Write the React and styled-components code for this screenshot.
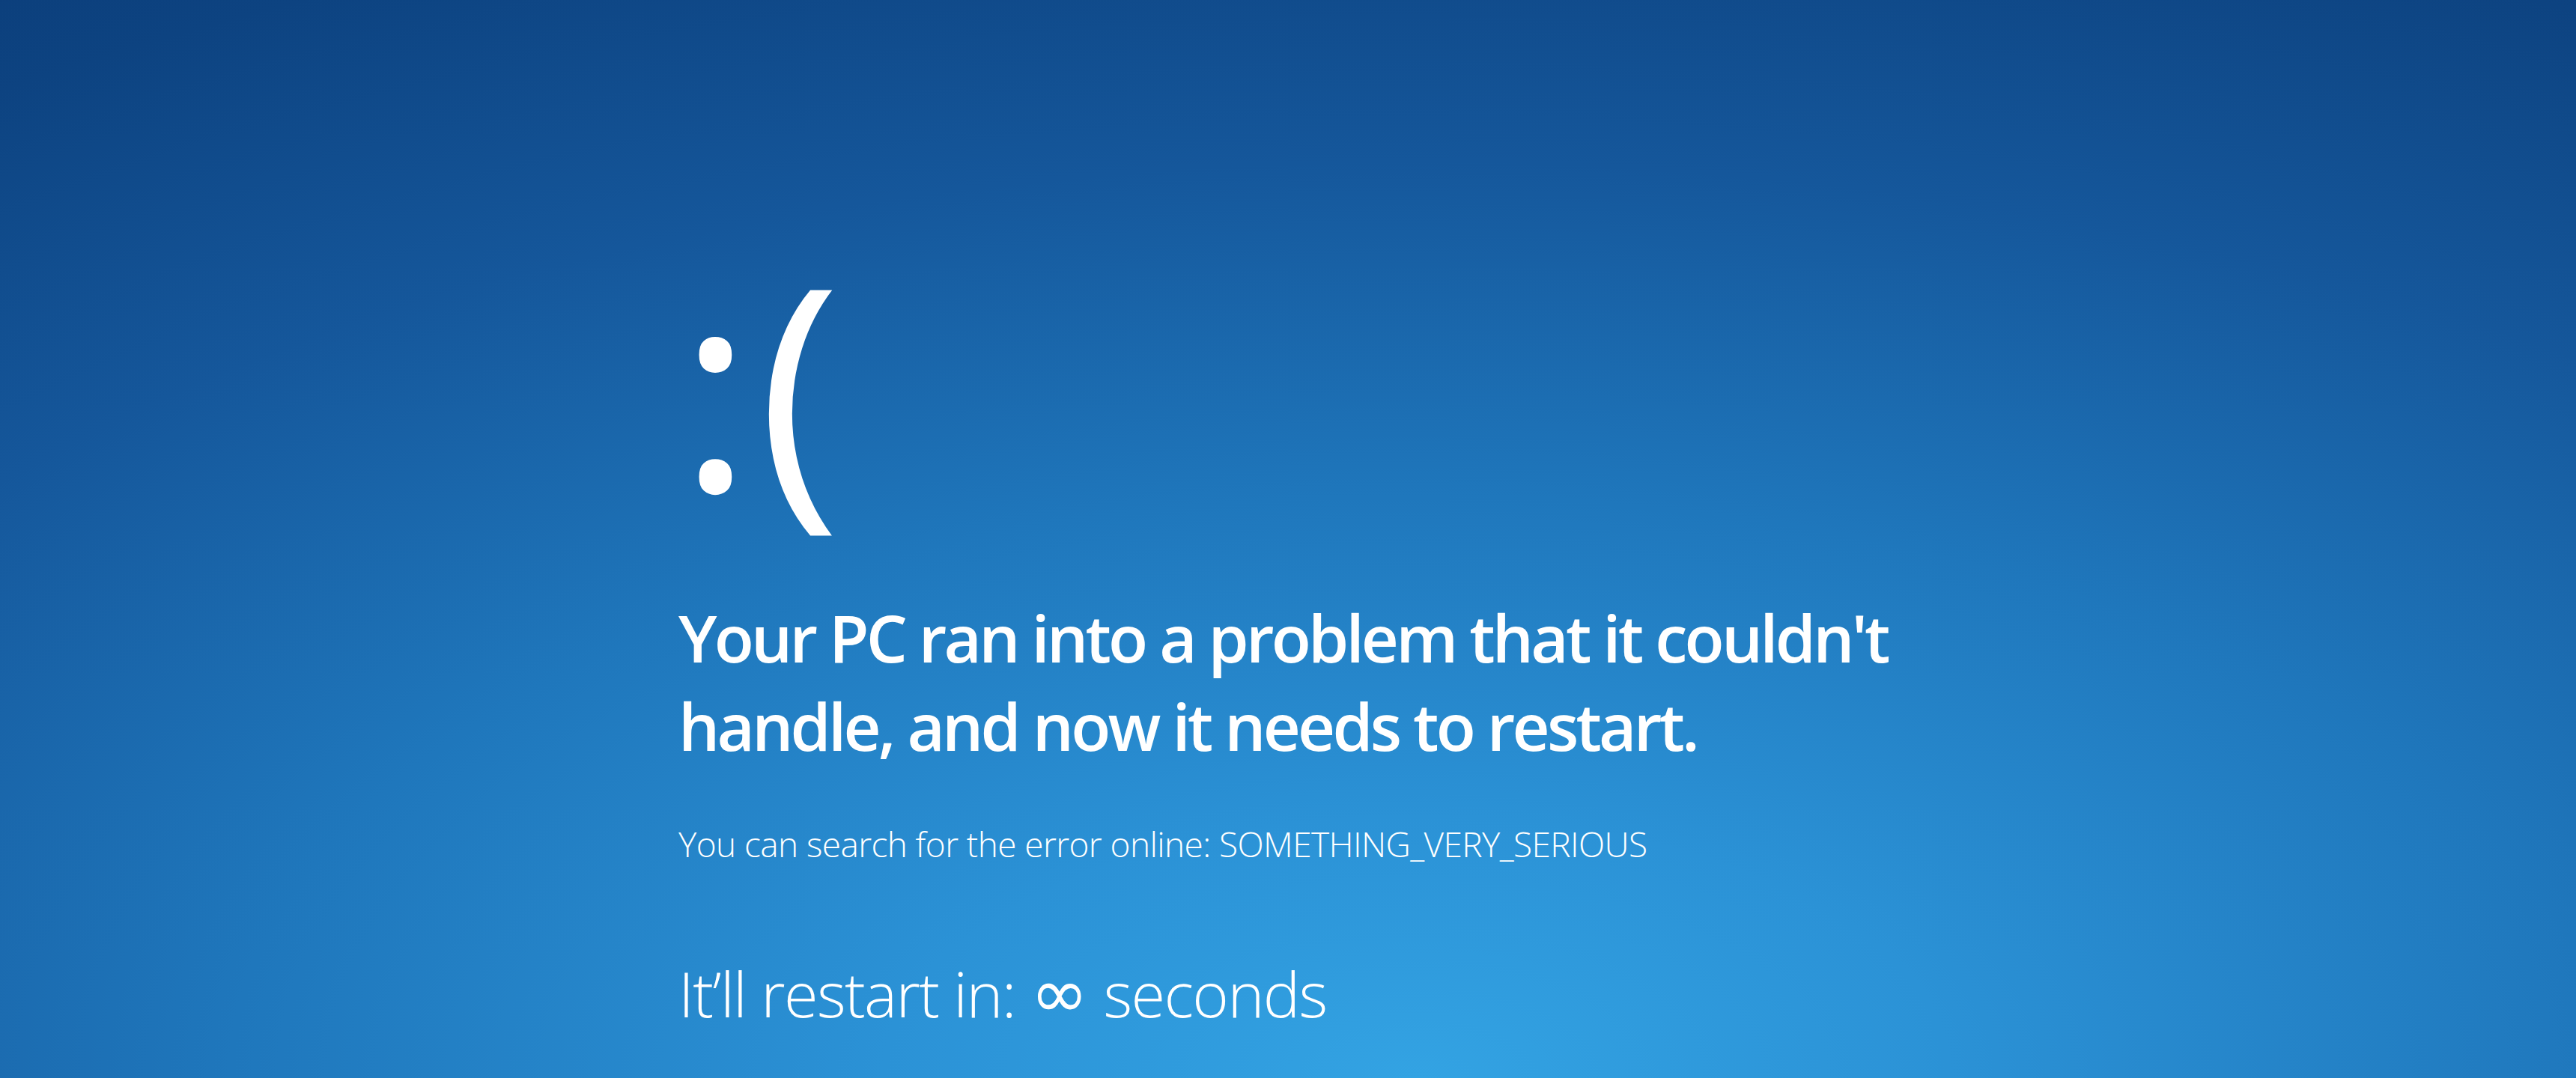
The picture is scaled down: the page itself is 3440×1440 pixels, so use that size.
import React from "react";
import styled, { createGlobalStyle } from "styled-components";

const GlobalStyle = createGlobalStyle`
  html, body {
    margin: 0;
    padding: 0;
    height: 100%;
    overflow: hidden;
  }
  #root {
    height: 100%;
  }
`;

const Screen = styled.main`
  box-sizing: border-box;
  width: 100%;
  height: 100vh;
  padding: 322px 0 0 906px;
  display: flex;
  flex-direction: column;
  align-items: flex-start;
  color: #ffffff;
  font-family: "Open Sans", "Noto Sans", "Liberation Sans", sans-serif;
  background: radial-gradient(
    ellipse 115% 135% at 55% 100%,
    #33a3e3 0%,
    #2b92d6 18%,
    #1f77bc 40%,
    #15579b 63%,
    #0d4381 83%,
    #0a3873 100%
  );
`;

const Face = styled.div`
  font-size: 376px;
  font-weight: 400;
  line-height: 1;
  letter-spacing: 7px;
  margin: 0;
  white-space: pre;
`;

const Headline = styled.h1`
  margin: 94px 0 0 0;
  font-size: 87px;
  font-weight: 600;
  line-height: 118px;
  letter-spacing: ${(p) => p.$tracking || "0"};
`;

const Detail = styled.p`
  margin: ${(p) => p.$gap} 0 0 0;
  font-size: ${(p) => p.$size};
  font-weight: ${(p) => p.$weight};
  line-height: ${(p) => p.$lineHeight};
  letter-spacing: ${(p) => p.$tracking || "0"};
`;

const Infinity = styled.span`
  font-family: "Noto Sans", "DejaVu Sans", sans-serif;
  font-weight: 400;
  font-size: 1.12em;
  line-height: 0;
  letter-spacing: 0;
`;

export default function App() {
  return (
    <>
      <GlobalStyle />
      <Screen>
        <Face>:(</Face>
        <Headline $tracking="-3.8px">
          Your PC ran into a problem that it couldn't
          <br />
          handle, and now it needs to restart.
        </Headline>
        <Detail $gap="69px" $size="46px" $weight={300} $lineHeight="60px" $tracking="-0.6px">
          You can search for the error online: SOMETHING_VERY_SERIOUS
        </Detail>
        <Detail $gap="120px" $size="83px" $weight={300} $lineHeight="100px" $tracking="-1.6px">
          It’ll restart in: <Infinity>∞</Infinity> seconds
        </Detail>
      </Screen>
    </>
  );
}
